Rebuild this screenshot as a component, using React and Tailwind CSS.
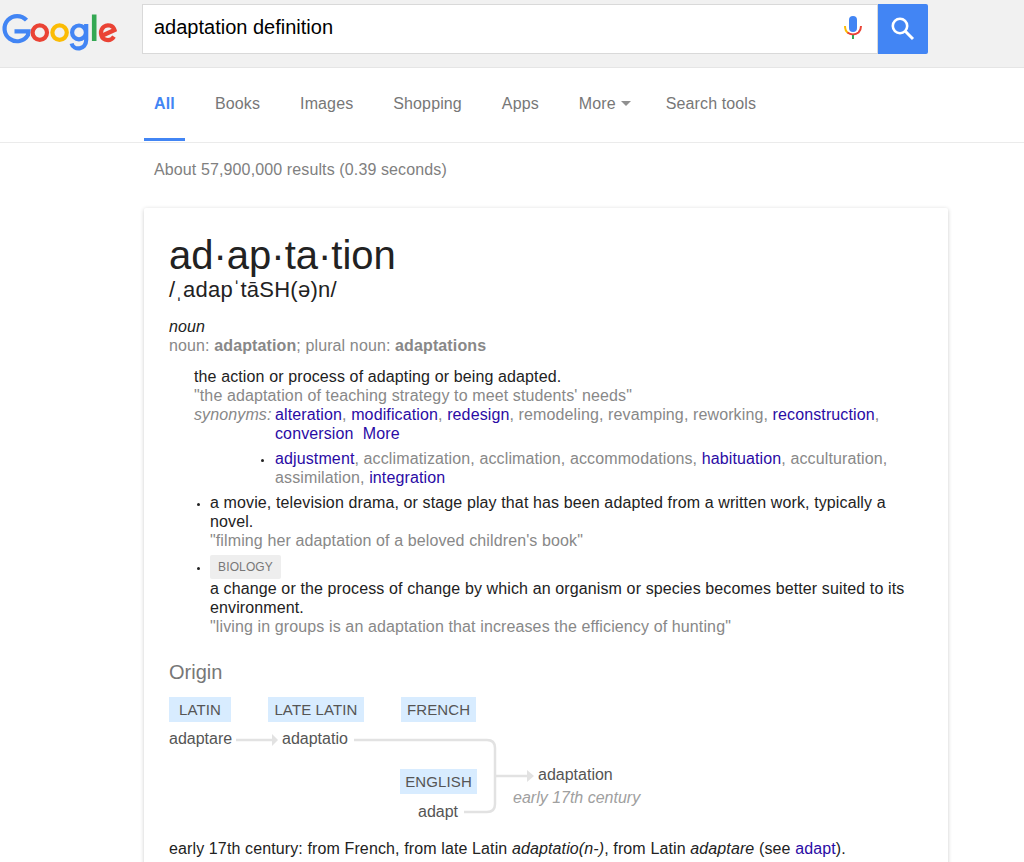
const navItems = [
  { label: "Books", gap: "ml-[30px]" },
  { label: "Images", gap: "ml-[40px]" },
  { label: "Shopping", gap: "ml-[40px]" },
  { label: "Apps", gap: "ml-[40px]" },
];

function GoogleLogo() {
  return (
    <svg width="118" height="40" viewBox="0 0 118 40" fill="none" strokeWidth="4.2">
      <path d="M27.5 8.2 A12.6 12.6 0 1 0 29 23 L29.4 19.4 H15.5" stroke="#4285f4" />
      <circle cx="40.8" cy="20.6" r="7.2" stroke="#ea4335" />
      <circle cx="60.6" cy="20.6" r="7.2" stroke="#fbbc05" />
      <circle cx="80" cy="20.4" r="6.9" stroke="#4285f4" />
      <path d="M87.2 12 V28 C87.2 38 74.5 39 72.6 31.5" stroke="#4285f4" />
      <path d="M95.2 2.5 V29" stroke="#34a853" strokeWidth="4.6" />
      <path d="M103.5 23.5 L115.5 18 C114 13.4 108.5 12 105 14.6 C100.5 18 101.2 25.8 106 27.5 C109.5 28.8 113 27.5 115 24.6" stroke="#ea4335" />
    </svg>
  );
}

function MicIcon() {
  return (
    <svg width="18" height="26" viewBox="0 0 18 26" fill="none">
      <rect x="5" y="0" width="8" height="16" rx="4" fill="#4285f4" />
      <path d="M1 10 C1 13 2 15.5 4 17" stroke="#fbbc05" strokeWidth="2" />
      <path d="M3.5 16.5 C6.5 19 11.5 19 14.5 16.5 C16 15 17 13 17 10" stroke="#ea4335" strokeWidth="2" />
      <rect x="8" y="19" width="2" height="4" fill="#34a853" />
    </svg>
  );
}

function Link({ children }) {
  return <span className="text-[#2a0ba5]">{children}</span>;
}

function Bullet({ className }) {
  return <span className={`absolute size-[3px] rounded-full bg-[#222] ${className}`} />;
}

function Chip({ className, children }) {
  return (
    <div className={`absolute h-[25px] bg-[#d8ecff] text-[#555] text-[15px] leading-[26px] text-center ${className}`}>
      {children}
    </div>
  );
}

function Word({ className, children }) {
  return <div className={`absolute text-[16px] leading-[19px] tracking-normal text-[#555] ${className}`}>{children}</div>;
}

function OriginDiagram() {
  return (
    <div className="relative mt-[13px] h-[134px]">
      <svg className="absolute left-0 top-0" width="500" height="134" fill="none" stroke="#e2e2e2" strokeWidth="2.5">
        <path d="M67 43 H103" />
        <path d="M185 43 H318 Q326 43 326 51 V107 Q326 115 318 115 H295" />
        <path d="M327 79 H358" />
        <path d="M103 37 L109 43 L103 49 Z" fill="#e2e2e2" stroke="none" />
        <path d="M358 73 L365 79 L358 85 Z" fill="#e2e2e2" stroke="none" />
      </svg>
      <Chip className="left-0 top-0 w-[62px]">LATIN</Chip>
      <Chip className="left-[99px] top-0 w-[96px]">LATE LATIN</Chip>
      <Chip className="left-[232px] top-0 w-[75px]">FRENCH</Chip>
      <Chip className="left-[231px] top-[72px] w-[77px]">ENGLISH</Chip>
      <Word className="left-0 top-[32px]">adaptare</Word>
      <Word className="left-[113px] top-[32px]">adaptatio</Word>
      <Word className="left-[249px] top-[105px]">adapt</Word>
      <Word className="left-[369px] top-[68px]">adaptation</Word>
      <Word className="left-[344px] top-[91px] italic !text-[#a0a0a0]">early 17th century</Word>
    </div>
  );
}

export default function App() {
  return (
    <div className="h-[862px] w-[1024px] overflow-hidden bg-white font-['Liberation_Sans',Arial,sans-serif] text-[16px] leading-[19px] tracking-[0.12px] text-[#222]">
      <header className="flex h-[68px] items-start border-b border-[#e5e5e5] bg-[#f1f1f1]">
        <div className="ml-[-1px] mt-[12px] w-[143px]">
          <GoogleLogo />
        </div>
        <div className="mt-[4px] flex h-[50px] w-[786px]">
          <div className="flex flex-1 items-center justify-between border border-[#d9d9d9] bg-white pb-[3px] pl-[11px] pr-[15px] text-[20px] tracking-normal text-black">
            <span>adaptation definition</span>
            <span className="pt-[3px]"><MicIcon /></span>
          </div>
          <button className="flex w-[50px] items-center justify-center rounded-r-[2px] bg-[#4285f4]">
            <svg width="26" height="26" viewBox="0 0 26 26" fill="none" stroke="white" strokeWidth="2.6">
              <circle cx="10" cy="10" r="7.2" />
              <path d="M15.3 15.3 L23 23" strokeWidth="3" />
            </svg>
          </button>
        </div>
      </header>

      <nav className="flex h-[75px] items-start border-b border-[#ebebeb] pl-[144px] text-[#777]">
        <div className="h-[73px] w-[41px] border-b-[3px] border-[#4285f4] pt-[26px] text-center font-bold text-[#4285f4]">All</div>
        <div className="flex pt-[26px]">
          {navItems.map((item) => (
            <span key={item.label} className={item.gap}>{item.label}</span>
          ))}
          <span className="ml-[40px] flex items-center">
            More
            <span className="ml-[5px] h-0 w-0 border-x-[5px] border-t-[5px] border-x-transparent border-t-[#909090]" />
          </span>
          <span className="ml-[35px]">Search tools</span>
        </div>
      </nav>

      <div className="pl-[154px] pt-[17px] text-[#808080]">About 57,900,000 results (0.39 seconds)</div>

      <main className="ml-[144px] mt-[29px] h-[700px] w-[804px] rounded-[2px] bg-white px-[25px] pt-[25px] shadow-[0_1px_4px_rgba(0,0,0,0.2)]">
        <h1 className="text-[40px] font-normal leading-[44px] tracking-normal">ad·ap·ta·tion</h1>
        <div className="mt-0 text-[22px] leading-[26px] tracking-[0.25px]">/ˌadapˈtāSH(ə)n/</div>

        <div className="mt-[14px] italic">noun</div>
        <div className="text-[#888]">
          noun: <b>adaptation</b>; plural noun: <b>adaptations</b>
        </div>

        <div className="mt-[12px] pl-[25px]">
          <div>the action or process of adapting or being adapted.</div>
          <div className="text-[#888]">"the adaptation of teaching strategy to meet students' needs"</div>
          <div className="flex text-[#888]">
            <i className="w-[81px] shrink-0">synonyms:</i>
            <div>
              <Link>alteration</Link>, <Link>modification</Link>, <Link>redesign</Link>, remodeling, revamping, reworking, <Link>reconstruction</Link>,<br />
              <Link>conversion</Link>&nbsp; <Link>More</Link>
            </div>
          </div>
          <div className="relative mt-[6px] pl-[81px] text-[#888]">
            <Bullet className="left-[67px] top-[10px]" />
            <Link>adjustment</Link>, acclimatization, acclimation, accommodations, <Link>habituation</Link>, acculturation,<br />
            assimilation, <Link>integration</Link>
          </div>
        </div>

        <div className="relative mt-[6px] pl-[41px]">
          <Bullet className="left-[28px] top-[10px]" />
          <div>a movie, television drama, or stage play that has been adapted from a written work, typically a<br />novel.</div>
          <div className="text-[#888]">"filming her adaptation of a beloved children's book"</div>
        </div>

        <div className="relative mt-[5px] pl-[41px]">
          <Bullet className="left-[28px] top-[12px]" />
          <div className="flex h-[24px] w-[71px] items-center justify-center rounded-[2px] bg-[#eee] text-[12px] text-[#777]">BIOLOGY</div>
          <div>a change or the process of change by which an organism or species becomes better suited to its<br />environment.</div>
          <div className="text-[#888]">"living in groups is an adaptation that increases the efficiency of hunting"</div>
        </div>

        <div className="mt-[24px] text-[20px] leading-[24px] tracking-normal text-[#777]">Origin</div>
        <OriginDiagram />

        <div className="mt-[8px]">
          early 17th century: from French, from late Latin <i>adaptatio(n-)</i>, from Latin <i>adaptare</i> (see <Link>adapt</Link>).
        </div>
      </main>
    </div>
  );
}
